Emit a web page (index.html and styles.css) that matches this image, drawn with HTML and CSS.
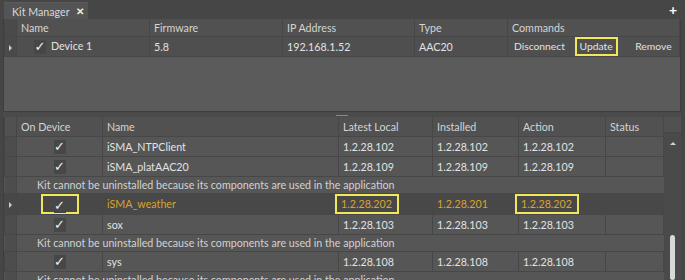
FILE: index.html
```html
<!DOCTYPE html>
<html lang="en">
  <head>
    <title>Kit Manager</title>
    <link rel="stylesheet" href="styles.css">
  </head>

  <body>
    <div class="TabBar">
      <div class="Tab">Kit Manager <span class="close">&#10005;</span></div>
      <span class="plus">+</span>
    </div>

    <div class="Panels">
      <!-- devices -->
      <div class="Devices">
        <table class="grid">
          <colgroup>
            <col style="width: 12px" />
            <col style="width: 133px" />
            <col style="width: 133px" />
            <col style="width: 132px" />
            <col style="width: 93px" />
            <col />
          </colgroup>
          <tr class="head">
            <th class="rh"></th>
            <th>Name</th>
            <th>Firmware</th>
            <th>IP Address</th>
            <th>Type</th>
            <th>Commands</th>
          </tr>
          <tr>
            <td class="rh"><span class="arrow"></span></td>
            <td class="dev"><span class="check">&#10003;</span>Device 1</td>
            <td>5.8</td>
            <td>192.168.1.52</td>
            <td>AAC20</td>
            <td class="cmds">
              <span class="cmd">Disconnect</span>
              <span class="cmd mark">Update</span>
              <span class="cmd">Remove</span>
            </td>
          </tr>
        </table>
      </div>

      <div class="Splitter"><span></span></div>

      <!-- kits -->
      <div class="Kits">
        <table class="grid">
          <colgroup>
            <col style="width: 12px" />
            <col style="width: 86px" />
            <col style="width: 236px" />
            <col style="width: 94px" />
            <col style="width: 86px" />
            <col style="width: 87px" />
            <col />
          </colgroup>
          <tr class="head">
            <th class="rh"></th>
            <th>On Device</th>
            <th>Name</th>
            <th>Latest Local</th>
            <th>Installed</th>
            <th>Action</th>
            <th>Status</th>
          </tr>
          <tr>
            <td class="rh"></td>
            <td class="ck"><span class="check">&#10003;</span></td>
            <td>iSMA_NTPClient</td>
            <td>1.2.28.102</td>
            <td>1.2.28.102</td>
            <td>1.2.28.102</td>
            <td></td>
          </tr>
          <tr>
            <td class="rh"></td>
            <td class="ck"><span class="check">&#10003;</span></td>
            <td>iSMA_platAAC20</td>
            <td>1.2.28.109</td>
            <td>1.2.28.109</td>
            <td>1.2.28.109</td>
            <td></td>
          </tr>
          <tr class="msg">
            <td class="rh"></td>
            <td colspan="6">Kit cannot be uninstalled because its components are used in the application</td>
          </tr>
          <tr class="sel">
            <td class="rh"><span class="arrow"></span></td>
            <td class="ck"><span class="box"><span class="check">&#10003;</span></span></td>
            <td>iSMA_weather</td>
            <td><span class="box">1.2.28.202</span></td>
            <td>1.2.28.201</td>
            <td><span class="box">1.2.28.202</span></td>
            <td></td>
          </tr>
          <tr>
            <td class="rh"></td>
            <td class="ck"><span class="check">&#10003;</span></td>
            <td>sox</td>
            <td>1.2.28.103</td>
            <td>1.2.28.103</td>
            <td>1.2.28.103</td>
            <td></td>
          </tr>
          <tr class="msg">
            <td class="rh"></td>
            <td colspan="6">Kit cannot be uninstalled because its components are used in the application</td>
          </tr>
          <tr>
            <td class="rh"></td>
            <td class="ck"><span class="check">&#10003;</span></td>
            <td>sys</td>
            <td>1.2.28.108</td>
            <td>1.2.28.108</td>
            <td>1.2.28.108</td>
            <td></td>
          </tr>
          <tr class="msg">
            <td class="rh"></td>
            <td colspan="6">Kit cannot be uninstalled because its components are used in the application</td>
          </tr>
        </table>

        <div class="Scroll">
          <div class="sh"></div>
          <div class="up"></div>
          <div class="thumb"></div>
        </div>
      </div>
    </div>
  </body>
</html>
```

FILE: styles.css
```css
html,
body {
  margin: 0;
  height: 280px;
  overflow: hidden;
  background-color: #464646;
  font-family: Lato, "Open Sans", sans-serif;
  font-size: 10.7px;
  color: #e2e2e2;
}

.TabBar {
  height: 19px;
  display: flex;
  align-items: flex-end;
  justify-content: space-between;
  padding: 0 8px 0 4px;
  box-sizing: border-box;
}

.Tab {
  height: 17px;
  width: 84px;
  box-sizing: border-box;
  padding: 0 0 0 8px;
  display: flex;
  align-items: center;
  white-space: nowrap;
  background-color: #545454;
  border-top: 1px solid #5c5c5c;
  color: #d8d8d8;
}

.Tab .close {
  margin-left: 6px;
  font-size: 10px;
  font-weight: bold;
  color: #ececec;
}

.plus {
  align-self: center;
  font-size: 14px;
  font-weight: bold;
  color: #ffffff;
  line-height: 14px;
}

.Panels {
  margin: 0 4px 0 3px;
}

.Devices {
  height: 93px;
  background-color: #5b5b5b;
  border: 1px solid #3e3e3e;
  border-top: none;
  box-sizing: border-box;
}

.Splitter {
  height: 5px;
  background-color: #4a4a4a;
  display: flex;
  justify-content: center;
  align-items: flex-end;
}

.Splitter span {
  width: 12px;
  height: 1px;
  margin-bottom: 1px;
  background-color: #8a8a8a;
}

.grid {
  border-collapse: collapse;
  table-layout: fixed;
  width: 100%;
}

.grid th,
.grid td {
  height: 19px;
  line-height: 14px;
  padding: 0 0 0 4px;
  text-align: left;
  font-weight: normal;
  white-space: nowrap;
  overflow: hidden;
  border: 1px solid #474747;
  border-top: none;
}

.grid .head th {
  height: 17px;
  background-color: #515151;
  color: #d4d4d4;
}

.Kits .grid .head th {
  height: 19px;
}

.grid td {
  background-color: #565656;
}

.grid .rh {
  background-color: #4d4d4d;
  padding: 0;
  text-align: center;
}

.arrow {
  display: inline-block;
  width: 0;
  height: 0;
  border-top: 3px solid transparent;
  border-bottom: 3px solid transparent;
  border-left: 3px solid #cfcfcf;
}

.check {
  display: inline-block;
  width: 12px;
  height: 14px;
  line-height: 14px;
  text-align: center;
  background-color: #474747;
  color: #f2f2f2;
  font-family: "DejaVu Sans", sans-serif;
  font-size: 13px;
  vertical-align: middle;
}

.dev .check {
  margin: 0 5px 0 13px;
}

.Devices .grid td {
  background-color: #4f4f4f;
}

.Devices .grid .rh {
  background-color: #4a4a4a;
}

.grid td.cmds {
  padding: 0 0 0 6px;
  font-size: 10.3px;
}

.cmd {
  display: inline-block;
  box-sizing: border-box;
  height: 19px;
  line-height: 19px;
  vertical-align: top;
}

.cmd.mark {
  border: 2px solid #f0e85a;
  line-height: 15px;
  padding: 0 3px;
  margin: 0 15px 0 7px;
}

.grid td.ck {
  padding: 0;
  text-align: center;
}

.Kits .grid td {
  height: 19px;
}

.Kits .grid .msg td {
  height: 16px;
  padding-left: 20px;
  color: #d2d2d2;
  border-left: none;
  border-right: none;
}

.Kits .grid .msg td.rh {
  padding: 0;
  border-right: 1px solid #474747;
}

.sel td {
  color: #dca22c;
}

.grid .sel td {
  overflow: visible;
  background-color: #484848;
}

.sel .box {
  display: inline-block;
  position: relative;
  box-sizing: border-box;
  height: 20px;
  line-height: 16px;
  border: 2px solid #f0e85a;
  padding: 0 5px 0 4px;
  margin-left: -8px;
  vertical-align: middle;
}

.sel td.ck .box {
  width: 38px;
  margin-left: 0;
  padding: 0;
  padding-top: 1px;
}

.Kits {
  display: flex;
  background-color: #565656;
  border-left: 1px solid #3e3e3e;
  height: 163px;
  overflow: hidden;
}

.Kits .grid {
  flex: 1;
  align-self: flex-start;
}

.Scroll {
  width: 17px;
  flex: none;
  background-color: #4a4a4a;
  display: flex;
  flex-direction: column;
  align-items: center;
}

.Scroll .sh {
  width: 100%;
  height: 20px;
  background-color: #515151;
  border-bottom: 1px solid #474747;
}

.Scroll .up {
  margin-top: 9px;
  width: 0;
  height: 0;
  border-left: 3px solid transparent;
  border-right: 3px solid transparent;
  border-bottom: 3px solid #d0d0d0;
}

.Scroll .thumb {
  margin-top: 90px;
  width: 5px;
  height: 60px;
  border-radius: 3px;
  background-color: #d8d8d8;
}
```
